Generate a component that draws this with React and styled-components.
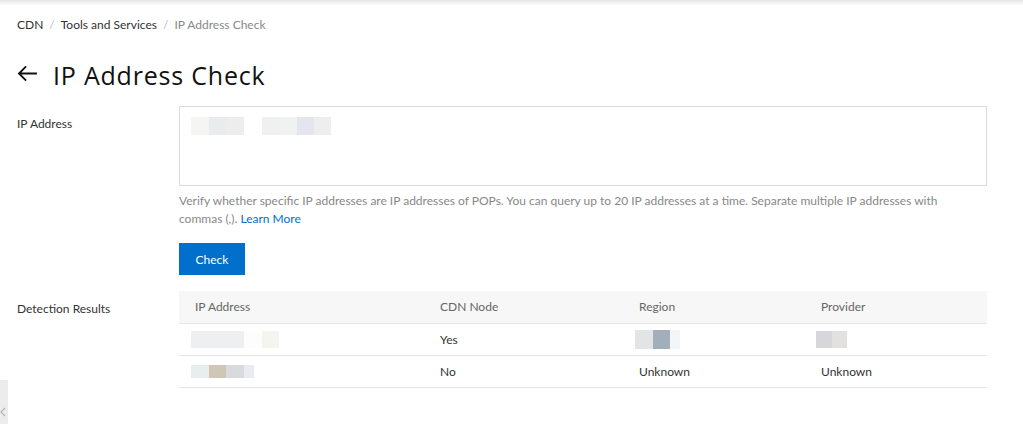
import React from 'react';
import styled, { createGlobalStyle } from 'styled-components';

const GlobalStyle = createGlobalStyle`
  html, body {
    margin: 0;
    padding: 0;
    background: #fff;
    font-family: Lato, "Liberation Sans", Arial, sans-serif;
    color: #333;
  }
`;

const ipMask = [
  ['#f5f5f4', 18], ['#e8ecec', 17], ['#eeeded', 18], ['#fff', 18],
  ['#f1f0f0', 18], ['#eef3f2', 17], ['#e3e6ef', 17], ['#eeeef0', 17],
];

const rows = [
  {
    ip: [['#eeeff0', 53], ['#fdfdfc', 18], ['#f6f4ee', 17]],
    ipHeight: 17,
    node: 'Yes',
    region: [['#e3e4e6', 18], ['#a2aeba', 17], ['#f3f6f9', 10]],
    provider: [['#d7d6da', 16], ['#e2e1df', 15]],
  },
  {
    ip: [['#e8eded', 18], ['#cfc6b8', 17], ['#d8dbde', 18], ['#e8ebf2', 10]],
    ipHeight: 13,
    node: 'No',
    region: 'Unknown',
    provider: 'Unknown',
  },
];

function Mask({ parts, height, shift }) {
  return (
    <MaskRow $shift={shift}>
      {parts.map(([color, w], i) => (
        <MaskBlock key={i} style={{ background: color, width: w, height }} />
      ))}
    </MaskRow>
  );
}

export default function App() {
  return (
    <>
      <GlobalStyle />
      <TopShadow />
      <Page>
        <Breadcrumb>
          <Crumb>CDN</Crumb>
          <Sep>/</Sep>
          <Crumb>Tools and Services</Crumb>
          <Sep>/</Sep>
          <Crumb $current>IP Address Check</Crumb>
        </Breadcrumb>

        <TitleRow>
          <BackArrow viewBox="0 0 22 18">
            <path d="M21 9H2M9.5 1.5L2 9l7.5 7.5" fill="none" stroke="#111" strokeWidth="2" />
          </BackArrow>
          <Title>IP Address Check</Title>
        </TitleRow>

        <FormRow>
          <Label>IP Address</Label>
          <Field>
            <TextBox>
              <Mask parts={ipMask} height={18} />
            </TextBox>
            <Help>
              Verify whether specific IP addresses are IP addresses of POPs. You can query up to 20 IP
              addresses at a time. Separate multiple IP addresses with commas (,). <Link>Learn More</Link>
            </Help>
            <CheckButton>Check</CheckButton>
          </Field>
        </FormRow>

        <FormRow $results>
          <Label>Detection Results</Label>
          <Table>
            <thead>
              <tr>
                <Th style={{ width: 245 }}>IP Address</Th>
                <Th style={{ width: 199 }}>CDN Node</Th>
                <Th style={{ width: 182 }}>Region</Th>
                <Th>Provider</Th>
              </tr>
            </thead>
            <tbody>
              {rows.map((r, i) => (
                <tr key={i}>
                  <Td><Mask parts={r.ip} height={r.ipHeight} /></Td>
                  <Td>{r.node}</Td>
                  <Td>{typeof r.region === 'string' ? r.region : <Mask parts={r.region} height={19} shift={-4} />}</Td>
                  <Td>{typeof r.provider === 'string' ? r.provider : <Mask parts={r.provider} height={17} shift={-5} />}</Td>
                </tr>
              ))}
            </tbody>
          </Table>
        </FormRow>
      </Page>
      <SideTab>
        <svg viewBox="0 0 8 12" width="8" height="12">
          <path d="M5 2L1 6l4 4" fill="none" stroke="#b5b5b5" strokeWidth="1.2" />
        </svg>
      </SideTab>
    </>
  );
}

const TopShadow = styled.div`
  position: fixed;
  top: 0;
  left: 0;
  right: 0;
  height: 6px;
  background: linear-gradient(to bottom, rgba(0, 0, 0, 0.1), rgba(0, 0, 0, 0));
`;

const Page = styled.div`
  padding: 16px 36px 0 17px;
  width: 1023px;
  box-sizing: border-box;
`;

const Breadcrumb = styled.div`
  display: flex;
  align-items: center;
  height: 17px;
  font-size: 12px;
`;

const Crumb = styled.span`
  color: ${(p) => (p.$current ? '#888' : '#333')};
`;

const Sep = styled.span`
  color: #bbb;
  margin: 0 6px;
`;

const TitleRow = styled.div`
  display: flex;
  align-items: center;
  gap: 15px;
  margin-top: 28px;
  height: 28px;
`;

const BackArrow = styled.svg`
  width: 21px;
  height: 17px;
  margin-top: -4px;
`;

const Title = styled.h1`
  margin: 0;
  font-family: "Open Sans", Lato, sans-serif;
  font-size: 25px;
  font-weight: 400;
  letter-spacing: 0.8px;
  color: #111;
`;

const FormRow = styled.div`
  display: flex;
  margin-top: ${(p) => (p.$results ? '16px' : '17px')};
`;

const Label = styled.div`
  width: 162px;
  flex-shrink: 0;
  font-size: 12px;
  color: #333;
  padding-top: 10px;
`;

const Field = styled.div`
  flex: 1;
  display: flex;
  flex-direction: column;
  align-items: flex-start;
`;

const TextBox = styled.div`
  width: 808px;
  height: 80px;
  box-sizing: border-box;
  border: 1px solid #dcdcdc;
  padding: 10px 11px;
`;

const MaskRow = styled.div`
  display: flex;
  align-items: center;
  margin-left: ${(p) => p.$shift || 0}px;
`;

const MaskBlock = styled.span`
  display: inline-block;
`;

const Help = styled.p`
  margin: 6px 0 0;
  width: 790px;
  font-size: 12px;
  line-height: 18px;
  color: #888;
`;

const Link = styled.a`
  color: #0070cc;
  cursor: pointer;
`;

const CheckButton = styled.button`
  margin-top: 15px;
  width: 66px;
  height: 32px;
  border: none;
  background: #0070cc;
  color: #fff;
  font-family: inherit;
  font-size: 12px;
  cursor: pointer;
`;

const Table = styled.table`
  width: 808px;
  border-collapse: collapse;
  font-size: 12px;
`;

const Th = styled.th`
  height: 32px;
  padding: 0 16px;
  box-sizing: border-box;
  text-align: left;
  font-weight: 400;
  color: #666;
  background: #f7f7f7;
  border-bottom: 1px solid #e5e5e5;
`;

const Td = styled.td`
  height: 32px;
  padding: 0 11px 0 12px;
  box-sizing: border-box;
  color: #333;
  border-bottom: 1px solid #e5e5e5;
  &:nth-child(n + 2) {
    padding-left: 16px;
  }
`;

const SideTab = styled.div`
  position: fixed;
  left: 0;
  top: 380px;
  width: 8px;
  height: 44px;
  background: #ececec;
  display: flex;
  align-items: flex-end;
  padding-bottom: 6px;
  box-sizing: border-box;
`;
